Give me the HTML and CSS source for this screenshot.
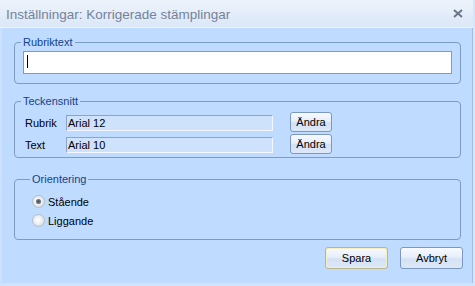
FILE: index.html
```html
<!DOCTYPE html>
<html lang="sv">
<head>
<meta charset="utf-8">
<title>Inställningar</title>
<link rel="stylesheet" href="styles.css">
</head>
<body>
<div class="window">
  <div class="titlebar">
    <span class="title">Inställningar: Korrigerade stämplingar</span>
    <span class="close"><svg width="10" height="9" viewBox="0 0 10 9"><path d="M1 1 L9 8 M9 1 L1 8" stroke="#6b7788" stroke-width="2"/></svg></span>
  </div>
  <div class="body">
    <fieldset class="group g1">
      <legend>Rubriktext</legend>
      <div class="textbox"><span class="caret"></span></div>
    </fieldset>
    <fieldset class="group g2">
      <legend>Teckensnitt</legend>
      <div class="fontrow"><span class="lbl">Rubrik</span><span class="field">Arial 12</span><button class="btn small">Ändra</button></div>
      <div class="fontrow"><span class="lbl">Text</span><span class="field">Arial 10</span><button class="btn small">Ändra</button></div>
    </fieldset>
    <fieldset class="group g3">
      <legend>Orientering</legend>
      <div class="radio-row"><span class="radio checked"></span><span>Stående</span></div>
      <div class="radio-row"><span class="radio"></span><span>Liggande</span></div>
    </fieldset>
    <div class="actions">
      <button class="btn big default">Spara</button>
      <button class="btn big">Avbryt</button>
    </div>
  </div>
</div>
</body>
</html>
```
FILE: styles.css
```css
* { box-sizing: border-box; }
html, body { margin: 0; padding: 0; }
body {
  width: 475px;
  height: 286px;
  overflow: hidden;
  font-family: "Liberation Sans", Arial, sans-serif;
  font-size: 11px;
  color: #000;
  background: #bfdbff;
}
.window {
  width: 475px;
  height: 286px;
  display: flex;
  flex-direction: column;
  background: #bfdbff;
  border-right: 2px solid #d4e6fd;
  border-bottom: 3px solid #d0e3fd;
}
.titlebar {
  flex: none;
  height: 28px;
  display: flex;
  align-items: center;
  justify-content: space-between;
  padding: 0 10px 0 6px;
  background: linear-gradient(#edf3fb, #dbe7f7);
  border-bottom: 1px solid #eef4fc;
}
.title {
  font-size: 13.5px;
  color: #75839a;
  padding-top: 1px;
}
.close { display: flex; }
.body {
  flex: 1;
  display: flex;
  flex-direction: column;
  padding: 8px 11px 0 12px;
  border-left: 2px solid #cde1fc;
  border-right: 1px solid #a3bfe5;
}
.group {
  margin: 0;
  min-width: 0;
  border: 1px solid #7d9cc5;
  border-radius: 4px;
}
.group legend {
  padding: 0 2px;
  margin-left: -2px;
  line-height: 13px;
  font-size: 11px;
  color: #15428b;
}
.g1 { padding: 2px 8px 9px 8px; }
.textbox {
  height: 23px;
  border: 1px solid #7f9db9;
  background: #fff;
  padding: 3px 0 0 3px;
}
.caret {
  display: block;
  width: 1px;
  height: 13px;
  background: #000;
}
.g2 {
  margin-top: 11px;
  padding: 3px 8px 3px 8px;
  display: flex;
  flex-direction: column;
  gap: 1px;
}
.fontrow {
  display: grid;
  grid-template-columns: 43px 207px auto;
  align-items: center;
  height: 21px;
}
.lbl { padding-left: 2px; padding-top: 3px; }
.field {
  height: 16px;
  margin-top: 2px;
  line-height: 14px;
  padding-left: 1px;
  background: #cfe2fb;
  border: 1px solid;
  border-color: #8aa5c8 #f4f8fe #f4f8fe #8aa5c8;
}
.btn {
  font-family: "Liberation Sans", Arial, sans-serif;
  font-size: 11px;
  color: #000;
  padding: 0;
  border: 1px solid #7d98bd;
  border-radius: 3px;
  background: linear-gradient(#f7faff 0%, #e7effa 45%, #d5e2f4 55%, #dce8f7 100%);
}
.small { width: 42px; height: 20px; margin-left: 17px; justify-self: start; }
.g3 {
  margin-top: 15px;
  padding: 6px 8px 9px 17px;
}
.radio-row {
  height: 19px;
  display: flex;
  align-items: center;
  gap: 3px;
}
.radio {
  width: 13px;
  height: 13px;
  border-radius: 50%;
  border: 1px solid #b5bfca;
  background: radial-gradient(circle at 45% 45%, #ffffff 0%, #eef1f4 40%, #c9d1da 100%);
  display: flex;
  align-items: center;
  justify-content: center;
}
.radio.checked::after {
  content: "";
  width: 5px;
  height: 5px;
  border-radius: 50%;
  background: radial-gradient(circle, #4f5862, #7c8691);
}
.actions {
  margin-top: 7px;
  margin-right: -2px;
  display: flex;
  justify-content: flex-end;
  gap: 12px;
}
.big { width: 63px; height: 22px; }
.default {
  border-color: #bcb48a;
  box-shadow: inset 0 0 0 1px #f6efc4;
}
```
